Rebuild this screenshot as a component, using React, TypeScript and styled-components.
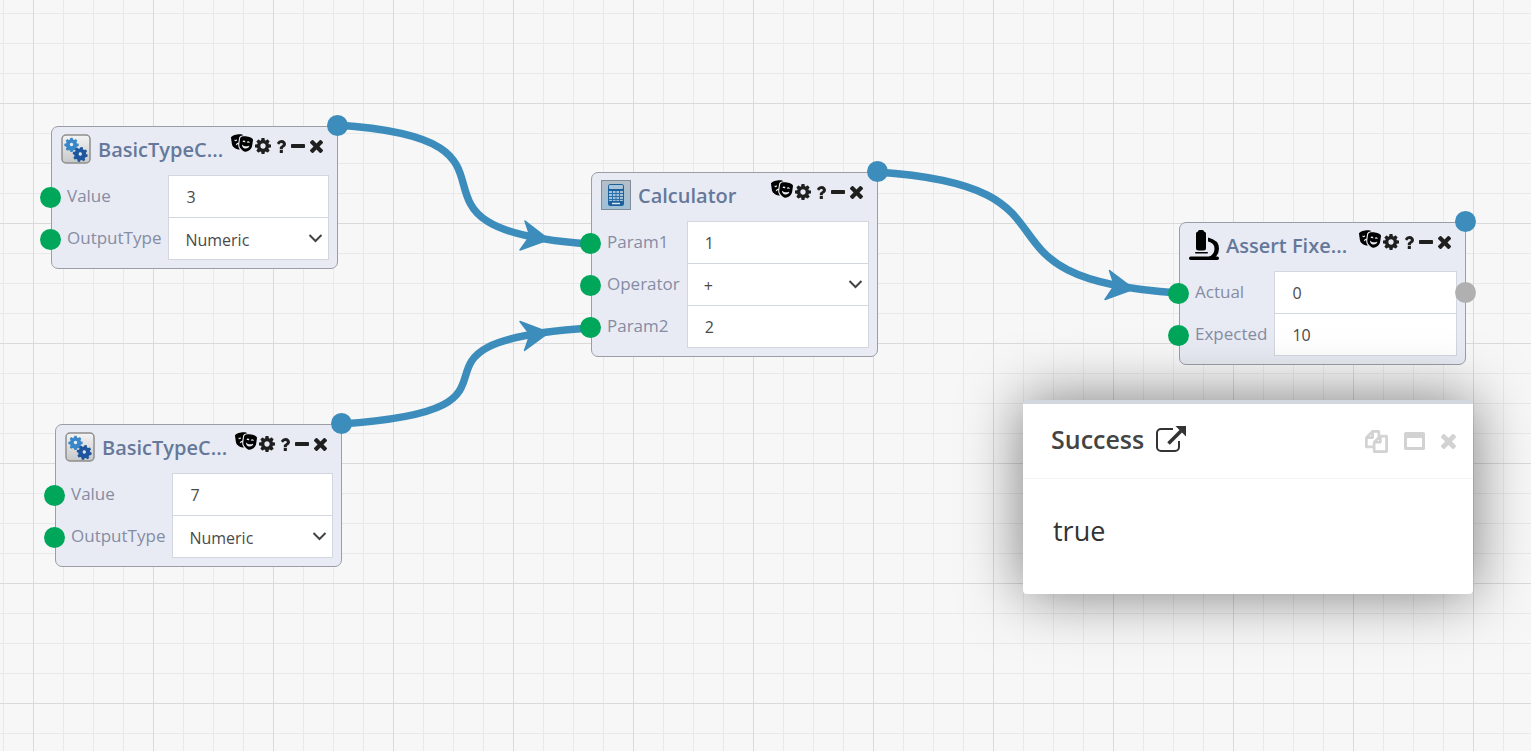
import React from "react";
import styled, { createGlobalStyle } from "styled-components";
import { FaMasksTheater } from "react-icons/fa6";

const GlobalStyle = createGlobalStyle`
  *, *::before, *::after { box-sizing: border-box; }
  html, body, #root { height: 100%; }
  body {
    margin: 0;
    font-family: "Open Sans", "Noto Sans", sans-serif;
    color: #4a4a4a;
  }
  button, input, select { font: inherit; color: inherit; }
`;

const Canvas = styled.main`
  position: relative;
  min-height: 100%;
  overflow: hidden;
  background-color: #f7f7f7;
  background-image:
    linear-gradient(to right, #dadada 1px, transparent 1px),
    linear-gradient(to bottom, #dadada 1px, transparent 1px),
    linear-gradient(to right, #e9e9e9 1px, transparent 1px),
    linear-gradient(to bottom, #e9e9e9 1px, transparent 1px);
  background-size: 120px 120px, 120px 120px, 30px 30px, 30px 30px;
  background-position: 33px 0, 0 103px, 3px 0, 0 13px;
`;

const Wires = styled.svg`
  position: absolute;
  inset: 0;
  width: 100%;
  height: 100%;
  z-index: 1;
  pointer-events: none;
`;

const NodeBox = styled.section<{ $x: number; $y: number }>`
  position: absolute;
  left: ${(p) => p.$x}px;
  top: ${(p) => p.$y}px;
  width: 287px;
  padding: 0 8px 8px 0;
  border: 1px solid #9c9da6;
  border-radius: 7px;
  background: #e8ebf3;
`;

const NodeHeader = styled.header`
  display: flex;
  align-items: flex-start;
  height: 48px;
  padding: 7px 6px 0 9px;
`;

const NodeIcon = styled.span`
  flex: none;
  width: 30px;
  height: 30px;
  svg { display: block; }
`;

const NodeTitle = styled.h2`
  flex: 1;
  min-width: 0;
  margin: 0 0 0 7px;
  font-size: 20px;
  line-height: 32px;
  font-weight: 600;
  white-space: nowrap;
  color: #66789a;
`;

const NodeTools = styled.div`
  display: flex;
  align-items: center;
  gap: 5px;
  height: 24px;
  color: #1f1f1f;
`;

const IconButton = styled.button`
  display: block;
  padding: 0;
  border: 0;
  background: none;
  color: inherit;
  cursor: pointer;
  svg { display: block; }
`;

const MaskButton = styled(IconButton)`
  margin: 0 -3px 6px 0;
  color: #000;
`;

const Fields = styled.div`
  display: grid;
  grid-template-columns: auto 1fr;
  padding-top: 1px;
`;

const FieldLabel = styled.label`
  position: relative;
  margin-top: -1px;
  padding: 0 7px 0 15px;
  font-size: 17px;
  line-height: 41px;
  color: #868ca4;
`;

const Control = styled.div`
  position: relative;
  height: 43px;
  margin-top: -1px;
`;

const TextInput = styled.input`
  display: block;
  width: 100%;
  height: 100%;
  padding: 0 17px;
  border: 1px solid #d2d6de;
  border-radius: 0;
  background: #fff;
  font-size: 16px;
`;

const Picker = styled.select`
  display: block;
  width: 100%;
  height: 100%;
  padding: 2px 16px 0;
  border: 1px solid #d2d6de;
  border-radius: 0;
  background: #fff;
  font-size: 16px;
  appearance: none;
`;

const Chevron = styled.svg`
  position: absolute;
  right: 6px;
  top: 16px;
  pointer-events: none;
`;

const Port = styled.span<{ $kind: "in" | "out" | "idle" }>`
  position: absolute;
  z-index: 2;
  width: 21px;
  height: 21px;
  border-radius: 50%;
  ${(p) => p.$kind === "in" && "left: -12px; top: 12px; background: #00a65a;"}
  ${(p) => p.$kind === "out" && "right: -11px; top: -12px; background: #3c8dbc;"}
  ${(p) => p.$kind === "idle" && "right: -11px; top: 59px; background: #b0b0b0;"}
`;

const Popup = styled.section`
  position: absolute;
  z-index: 3;
  left: 1023px;
  top: 400px;
  width: 450px;
  border-top: 4px solid #d2d6de;
  border-radius: 4px;
  background: #fff;
  box-shadow: 0 0 60px rgba(0, 0, 0, 0.5);
`;

const PopupHeader = styled.header`
  display: flex;
  align-items: center;
  justify-content: space-between;
  height: 75px;
  padding: 0 17px 0 28px;
  border-bottom: 1px solid #f4f4f4;
`;

const PopupHeading = styled.div`
  display: flex;
  align-items: center;
  gap: 12px;
  padding-bottom: 4px;
`;

const PopupTitle = styled.h2`
  margin: 0;
  font-size: 25px;
  line-height: 32px;
  font-weight: 600;
  color: #444;
`;

const PopupTools = styled.div`
  display: flex;
  align-items: center;
  gap: 16px;
  color: #d2d2d2;
`;

const PopupBody = styled.p`
  margin: 0;
  padding: 33px 30px 44px;
  font-size: 27px;
  line-height: 38px;
  color: #333;
`;

const GLYPHS = {
  times:
    "M1490 1322q0 40-28 68l-136 136q-28 28-68 28t-68-28l-294-294-294 294q-28 28-68 28t-68-28l-136-136q-28-28-28-68t28-68l294-294-294-294q-28-28-28-68t28-68l136-136q28-28 68-28t68 28l294 294 294-294q28-28 68-28t68 28l136 136q28 28 28 68t-28 68l-294 294 294 294q28 28 28 68z",
  minus:
    "M1600 736v192q0 40-28 68t-68 28h-1216q-40 0-68-28t-28-68v-192q0-40 28-68t68-28h1216q40 0 68 28t28 68z",
  cog: "M1152 896q0-106-75-181t-181-75-181 75-75 181 75 181 181 75 181-75 75-181zm512-109v222q0 12-8 23t-20 13l-185 28q-19 54-39 91 35 50 107 138 10 12 10 25t-9 23q-27 37-99 108t-94 71q-12 0-26-9l-138-108q-44 23-91 38-16 136-29 186-7 28-36 28h-222q-14 0-24.500-8.500t-11.500-21.500l-28-184q-49-16-90-37l-141 107q-10 9-25 9-14 0-25-11-126-114-165-168-7-10-7-23 0-12 8-23 15-21 51-66.500t54-70.500q-27-50-41-99l-183-27q-13-2-21-12.500t-8-23.500v-222q0-12 8-23t19-13l186-28q14-46 39-92-40-57-107-138-10-12-10-24 0-10 9-23 26-36 98.500-107.500t94.500-71.500q13 0 26 10l138 107q44-23 91-38 16-136 29-186 7-28 36-28h222q14 0 24.500 8.500t11.500 21.500l28 184q49 16 90 37l142-107q9-9 24-9 13 0 25 10 129 119 165 170 7 8 7 22 0 12-8 23-15 21-51 66.500t-54 70.500q26 50 41 98l183 28q13 2 21 12.500t8 23.500z",
  question:
    "M1088 1256v240q0 16-12 28t-28 12h-240q-16 0-28-12t-12-28v-240q0-16 12-28t28-12h240q16 0 28 12t12 28zm316-600q0 54-15.500 101t-35 76.500-55 59.500-57.500 43.500-61 35.500q-41 23-68.500 65t-27.500 67q0 17-12 32.500t-28 15.500h-240q-15 0-25.500-18.500t-10.500-37.500v-45q0-83 65-156.500t143-108.500q59-27 84-56t25-76q0-42-46.500-74t-107.500-32q-65 0-108 29-35 25-107 115-13 16-31 16-12 0-25-8l-164-125q-13-10-15.500-25t5.500-28q160-266 464-266 80 0 161 31t146 83 106 127.500 41 158.500z",
  copy: "M1696 384q40 0 68 28t28 68v1216q0 40-28 68t-68 28h-960q-40 0-68-28t-28-68v-288h-544q-40 0-68-28t-28-68v-672q0-40 20-88t48-76l408-408q28-28 76-48t88-20h416q40 0 68 28t28 68v328q68-40 128-40h416zm-544 213l-299 299h299v-299zm-640-384l-299 299h299v-299zm196 647l316-316v-416h-384v416q0 40-28 68t-68 28h-416v640h512v-256q0-40 20-88t48-76zm956 804v-1152h-384v416q0 40-28 68t-68 28h-416v640h896z",
  window:
    "M256 1408h1280v-768h-1280v768zm1536-1120v1216q0 66-47 113t-113 47h-1472q-66 0-113-47t-47-113v-1216q0-66 47-113t113-47h1472q66 0 113 47t47 113z",
};

type GlyphProps = { name: keyof typeof GLYPHS; box: string; w: number; h: number; bold?: number };
const Glyph = ({ name, box, w, h, bold = 0 }: GlyphProps) => (
  <svg
    width={w}
    height={h}
    viewBox={box}
    fill="currentColor"
    stroke={bold ? "currentColor" : "none"}
    strokeWidth={bold}
    preserveAspectRatio="none"
    aria-hidden
  >
    <path d={GLYPHS[name]} />
  </svg>
);

const GEAR =
  "M-1.300-7h2.600l.5 2 1.500.6 1.800-1 1.800 1.800-1 1.800.6 1.500 2 .5v2.600l-2 .5-.6 1.500 1 1.800-1.800 1.800-1.800-1-1.500.6-.5 2h-2.600l-.5-2-1.500-.6-1.800 1-1.800-1.800 1-1.800-.6-1.500-2-.5v-2.600l2-.5.6-1.500-1-1.800 1.800-1.800 1.800 1 1.500-.6z";

const GearsIcon = () => (
  <svg width="30" height="30" viewBox="0 0 30 30" aria-hidden>
    <defs>
      <linearGradient id="plate" x1="0" y1="0" x2="0" y2="1">
        <stop offset="0" stopColor="#f4f4f4" />
        <stop offset="1" stopColor="#c6c7c8" />
      </linearGradient>
    </defs>
    <rect x="1" y="1" width="28" height="28" rx="4" fill="url(#plate)" stroke="#8e8e8e" strokeWidth="1.500" />
    <g transform="translate(10.500 10.500) scale(.84)">
      <path d={GEAR} fill="#3a87c8" transform="translate(0 -1)" />
      <circle r="2" fill="#e9f1f8" />
    </g>
    <g transform="translate(19.300 20) rotate(12) scale(.88)">
      <path d={GEAR} fill="#1e559f" transform="translate(0 -1)" />
      <circle r="1.900" fill="#dce8f4" />
    </g>
  </svg>
);

const CalculatorIcon = () => (
  <svg width="30" height="30" viewBox="0 0 30 30" aria-hidden>
    <defs>
      <linearGradient id="tile" x1="0" y1="0" x2="0" y2="1">
        <stop offset="0" stopColor="#b4bfc8" />
        <stop offset="1" stopColor="#9dc0d8" />
      </linearGradient>
    </defs>
    <rect x=".5" y=".5" width="29" height="29" fill="url(#tile)" stroke="#838c96" />
    <rect x="7" y="4" width="16" height="22" rx="2.500" fill="#1c609c" />
    <rect x="8" y="5" width="14" height="4" rx="1" fill="#a9c3d8" />
    <rect x="8" y="11" width="14" height="10" fill="#a4c3da" />
    <path d="M8 13.500h14M8 16.500h14M8 19.500h14M11.500 11v10M15 11v10M18.500 11v10" stroke="#2c6ea8" strokeWidth="1" />
    <path d="M11 23.500h8" stroke="#d5e4ef" strokeWidth="1.500" />
  </svg>
);

const MicroscopeIcon = () => (
  <svg width="30" height="30" viewBox="0 0 30 30" aria-hidden>
    <path d="M9 1.500Q9 0 10.500 0h3Q15 0 15 1.500q2 .5 2 2V18q0 2.500-2.500 2.500h-5Q7 20.500 7 18V3.500q0-1.500 2-2z" />
    <rect x="6" y="22" width="13" height="1.500" rx=".7" />
    <rect x="0" y="26.500" width="30" height="3.500" rx="1.700" />
    <path d="M19 7.500q11 2.500 11 11 0 5-3.500 8.500h-7q6-2.500 6-8.500 0-5.500-6.500-7z" />
  </svg>
);

const ExternalIcon = () => (
  <svg width="30" height="26" viewBox="0 0 30 26" fill="none" stroke="#333" aria-hidden>
    <path d="M17 3H5a4 4 0 0 0-4 4v14a4 4 0 0 0 4 4h14a4 4 0 0 0 4-4v-6" strokeWidth="2" />
    <path d="M12.500 17.500L25 5" strokeWidth="3.500" />
    <path d="M19.500 0H30v10.500z" fill="#333" stroke="none" />
  </svg>
);

type Field = { label: string; value: string; select?: boolean };
type NodeProps = {
  id: string;
  x: number;
  y: number;
  title: string;
  icon: React.ReactNode;
  fields: Field[];
  idle?: boolean;
};

const FlowNode = ({ id, x, y, title, icon, fields, idle }: NodeProps) => (
  <NodeBox $x={x} $y={y}>
    <Port $kind="out" />
    {idle && <Port $kind="idle" />}
    <NodeHeader>
      <NodeIcon>{icon}</NodeIcon>
      <NodeTitle>{title}</NodeTitle>
      <NodeTools>
        <MaskButton type="button" aria-label="Mock">
          <FaMasksTheater size={22} />
        </MaskButton>
        <IconButton type="button" aria-label="Settings">
          <Glyph name="cog" box="128 128 1536 1536" w={16} h={16} />
        </IconButton>
        <IconButton type="button" aria-label="Help">
          <Glyph name="question" box="384 256 1024 1280" w={10} h={13} />
        </IconButton>
        <IconButton type="button" aria-label="Collapse">
          <Glyph name="minus" box="192 640 1408 384" w={14} h={4} />
        </IconButton>
        <IconButton type="button" aria-label="Remove">
          <Glyph name="times" box="302 366 1188 1188" w={13} h={13} />
        </IconButton>
      </NodeTools>
    </NodeHeader>
    <Fields>
      {fields.map((f) => {
        const fieldId = `${id}-${f.label}`;
        return (
          <React.Fragment key={f.label}>
            <FieldLabel htmlFor={fieldId}>
              <Port $kind="in" />
              {f.label}
            </FieldLabel>
            <Control>
              {f.select ? (
                <>
                  <Picker id={fieldId} defaultValue={f.value}>
                    <option>{f.value}</option>
                  </Picker>
                  <Chevron width="15" height="11" viewBox="0 0 15 11" fill="none" stroke="#444" strokeWidth="2">
                    <path d="M1.500 2l6 6 6-6" />
                  </Chevron>
                </>
              ) : (
                <TextInput id={fieldId} type="text" defaultValue={f.value} />
              )}
            </Control>
          </React.Fragment>
        );
      })}
    </Fields>
  </NodeBox>
);

export default function App() {
  return (
    <>
      <GlobalStyle />
      <Canvas>
        <FlowNode
          id="first"
          x={51}
          y={126}
          title="BasicTypeC..."
          icon={<GearsIcon />}
          fields={[
            { label: "Value", value: "3" },
            { label: "OutputType", value: "Numeric", select: true },
          ]}
        />
        <FlowNode
          id="second"
          x={55}
          y={424}
          title="BasicTypeC..."
          icon={<GearsIcon />}
          fields={[
            { label: "Value", value: "7" },
            { label: "OutputType", value: "Numeric", select: true },
          ]}
        />
        <FlowNode
          id="calc"
          x={591}
          y={172}
          title="Calculator"
          icon={<CalculatorIcon />}
          fields={[
            { label: "Param1", value: "1" },
            { label: "Operator", value: "+", select: true },
            { label: "Param2", value: "2" },
          ]}
        />
        <FlowNode
          id="assert"
          x={1179}
          y={222}
          title="Assert Fixe..."
          icon={<MicroscopeIcon />}
          idle
          fields={[
            { label: "Actual", value: "0" },
            { label: "Expected", value: "10" },
          ]}
        />

        <Wires aria-hidden>
          <g fill="none" stroke="#3c8dbc" strokeWidth="7.500">
            <path d="M337 125C562 140 365 229 590 244" />
            <path d="M341 424C566 409 365 343 590 328" />
            <path d="M877 172C1102 187 953 278 1178 293" />
          </g>
          <g fill="#3c8dbc" stroke="#3c8dbc" strokeWidth="1.500" strokeLinejoin="round">
            <path d="M549 239.500L525 221l5 15-10 14z" />
            <path d="M549 332.500L520 321.500l10 13-5.500 16z" />
            <path d="M1134 289L1109.500 270.500l5 15-9.500 14z" />
          </g>
        </Wires>

        <Popup>
          <PopupHeader>
            <PopupHeading>
              <PopupTitle>Success</PopupTitle>
              <IconButton type="button" aria-label="Open in new window">
                <ExternalIcon />
              </IconButton>
            </PopupHeading>
            <PopupTools>
              <IconButton type="button" aria-label="Copy">
                <Glyph name="copy" box="-50 -50 1892 1892" w={23} h={23} bold={90} />
              </IconButton>
              <IconButton type="button" aria-label="Maximize">
                <Glyph name="window" box="0 128 1792 1536" w={21} h={18} />
              </IconButton>
              <IconButton type="button" aria-label="Close">
                <Glyph name="times" box="302 366 1188 1188" w={15} h={15} />
              </IconButton>
            </PopupTools>
          </PopupHeader>
          <PopupBody>true</PopupBody>
        </Popup>
      </Canvas>
    </>
  );
}
